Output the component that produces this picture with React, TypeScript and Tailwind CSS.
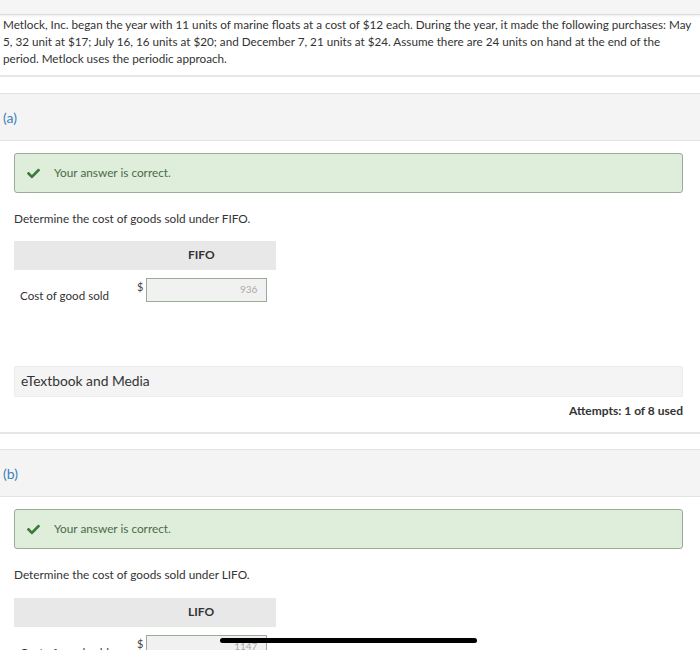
import { FaCheck } from "react-icons/fa";

function Correct() {
  return (
    <div className="ml-[14px] mr-[17px] flex h-[40px] items-center rounded-[3px] border border-[#9aab97] bg-[#dfeedb] pl-[12px]">
      <FaCheck className="h-[13px] w-[13px] text-[#3d7a3a]" />
      <span className="ml-[14px] text-[11.8px] text-[#4b6b48]">Your answer is correct.</span>
    </div>
  );
}

function Section({ label }: { label: string }) {
  return (
    <div className="flex h-[48px] items-center border-y border-[#e3e3e3] bg-[#f4f4f4] px-[3px]">
      <span className="text-[14px] text-[#3b82b8]">{label}</span>
    </div>
  );
}

function CostTable({ method, value }: { method: string; value: string }) {
  return (
    <div className="mx-[14px] w-[262px]">
      <div className="flex h-[29px] items-center bg-[#e8e8e8]">
        <span className="ml-[174px] text-[12px] font-bold text-[#333]">{method}</span>
      </div>
      <div className="flex items-start pt-[8px]">
        <span className="ml-[6px] mt-[9px] w-[117px] text-[11.6px] text-[#333]">Cost of good sold</span>
        <span className="mt-[1px] text-[11px] text-[#444]">$</span>
        <div className="ml-[3px] flex h-[24px] w-[121px] items-center justify-end border border-[#9aab97] bg-[#f1f1f1] pr-[9px] text-[10px] text-[#aaa]">
          {value}
        </div>
      </div>
    </div>
  );
}

export default function App() {
  return (
    <div className="relative h-[650px] w-[700px] overflow-hidden bg-white font-['Lato',sans-serif] text-[#333]">
      <div className="h-[15px] border-b border-[#dcdcdc] bg-[#f5f5f5] shadow-[0_1px_2px_rgba(0,0,0,0.08)]" />
      <p className="whitespace-nowrap px-[3px] pt-[1px] text-[11.7px] leading-[17px] text-[#333]">
        Metlock, Inc. began the year with 11 units of marine floats at a cost of $12 each. During the year, it made the following purchases: May
        <br />
        5, 32 unit at $17; July 16, 16 units at $20; and December 7, 21 units at $24. Assume there are 24 units on hand at the end of the
        <br />
        period. Metlock uses the periodic approach.
      </p>
      <div className="mt-[8px] h-[2px] bg-[#e6e6e6]" />
      <div className="h-[16px]" />
      <Section label="(a)" />
      <div className="h-[12px]" />
      <Correct />
      <p className="mx-[14px] mt-[17px] text-[11.8px]">Determine the cost of goods sold under FIFO.</p>
      <div className="h-[13px]" />
      <CostTable method="FIFO" value="936" />
      <div className="ml-[14px] mr-[17px] mt-[62px] flex h-[31px] items-center rounded-[2px] border border-[#ececec] bg-[#f4f4f4] px-[6px] text-[13.8px] text-[#333]">
        eTextbook and Media
      </div>
      <div className="mx-[17px] mt-[5px] text-right text-[12px] font-bold text-[#333]">Attempts: 1 of 8 used</div>
      <div className="mt-[12px] h-[2px] bg-[#e6e6e6]" />
      <div className="h-[15px]" />
      <Section label="(b)" />
      <div className="h-[12px]" />
      <Correct />
      <p className="mx-[14px] mt-[17px] text-[11.8px]">Determine the cost of goods sold under LIFO.</p>
      <div className="h-[14px]" />
      <CostTable method="LIFO" value="1147" />
      <div className="absolute left-[220px] top-[638px] h-[5px] w-[257px] rounded-full bg-black" />
    </div>
  );
}
